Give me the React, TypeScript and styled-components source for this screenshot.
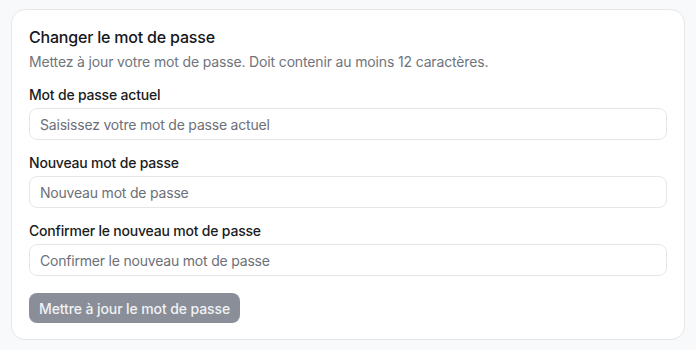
import React from "react";
import styled, { createGlobalStyle } from "styled-components";

const GlobalStyle = createGlobalStyle`
  * { box-sizing: border-box; }
  body {
    margin: 0;
    background: #f8f9fa;
    font-family: Inter, "Noto Sans", sans-serif;
    -webkit-font-smoothing: antialiased;
  }
`;

const Page = styled.div`
  padding: 9px 11px 10px 11px;
`;

const Card = styled.section`
  background: #ffffff;
  border: 1px solid #e4e6e9;
  border-radius: 14px;
  padding: 15px 17px 16px 17px;
`;

const Title = styled.h2`
  margin: 0;
  font-size: 16px;
  line-height: 24px;
  font-weight: 500;
  color: #15171c;
  letter-spacing: -0.2px;
`;

const Description = styled.p`
  margin: 3px 0 0 0;
  font-size: 14px;
  line-height: 20px;
  color: #70747c;
  letter-spacing: -0.15px;
`;

const Form = styled.form`
  display: flex;
  flex-direction: column;
  gap: 13px;
  margin-top: 13px;
`;

const Field = styled.div`
  display: flex;
  flex-direction: column;
  gap: 3px;
`;

const Label = styled.label`
  font-size: 14px;
  line-height: 20px;
  font-weight: 500;
  color: #1a1c21;
  letter-spacing: -0.2px;
`;

const Input = styled.input`
  height: 32px;
  width: 100%;
  border: 1px solid #e4e6e9;
  border-radius: 8px;
  padding: 0 10px;
  font-family: inherit;
  font-size: 14px;
  color: #15171c;
  background: #ffffff;
  letter-spacing: -0.2px;
  outline: none;
  &::placeholder {
    color: #6c7078;
  }
`;

const SubmitButton = styled.button`
  align-self: flex-start;
  margin-top: 4px;
  height: 30px;
  padding: 0 10px;
  border: none;
  border-radius: 8px;
  background: #898e99;
  color: #f1f2f4;
  font-family: inherit;
  font-size: 14px;
  font-weight: 500;
  letter-spacing: -0.1px;
`;

const fields = [
  { id: "current", label: "Mot de passe actuel", placeholder: "Saisissez votre mot de passe actuel" },
  { id: "new", label: "Nouveau mot de passe", placeholder: "Nouveau mot de passe" },
  { id: "confirm", label: "Confirmer le nouveau mot de passe", placeholder: "Confirmer le nouveau mot de passe" },
];

const App = () => {
  return (
    <>
      <GlobalStyle />
      <Page>
        <Card>
          <Title>Changer le mot de passe</Title>
          <Description>
            Mettez à jour votre mot de passe. Doit contenir au moins 12 caractères.
          </Description>
          <Form onSubmit={(e) => e.preventDefault()}>
            {fields.map((f) => (
              <Field key={f.id}>
                <Label htmlFor={f.id}>{f.label}</Label>
                <Input id={f.id} type="password" placeholder={f.placeholder} />
              </Field>
            ))}
            <SubmitButton type="submit" disabled>
              Mettre à jour le mot de passe
            </SubmitButton>
          </Form>
        </Card>
      </Page>
    </>
  );
};

export default App;
